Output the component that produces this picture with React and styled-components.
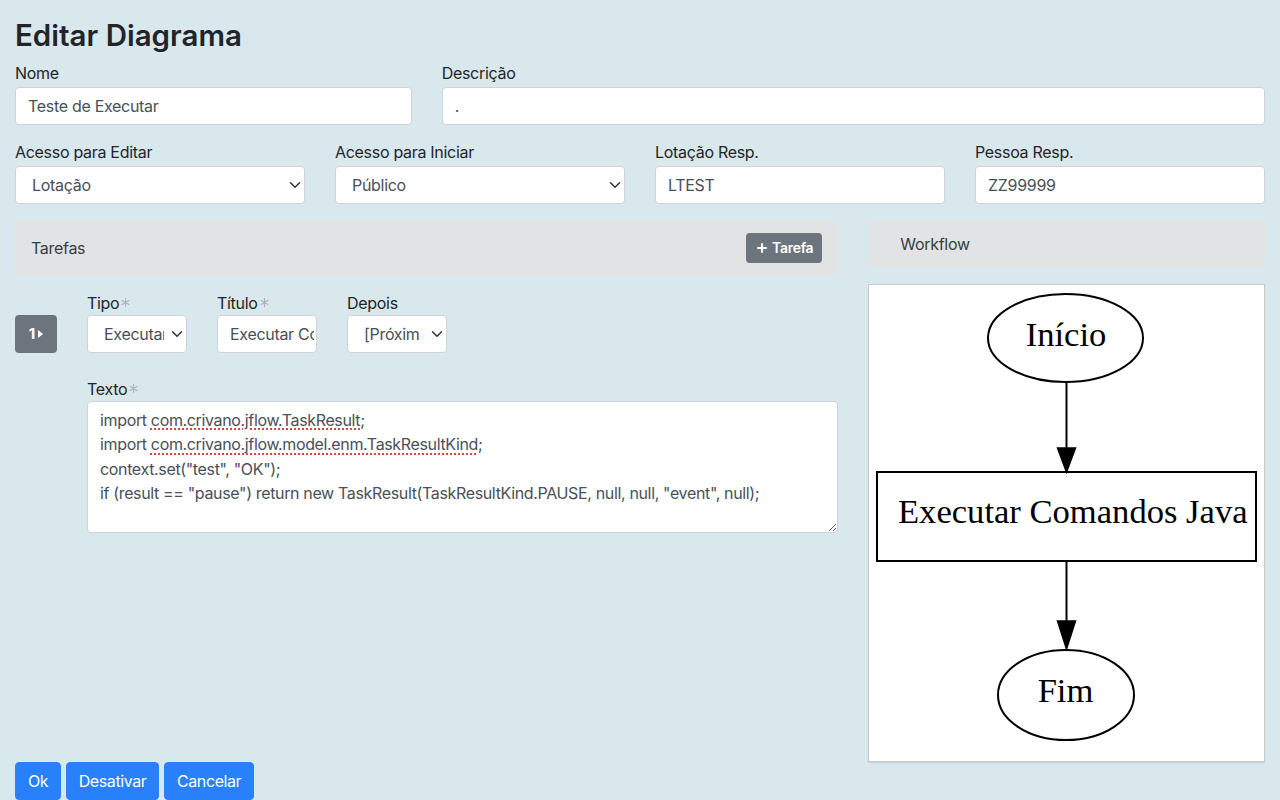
import React from "react";
import styled, { createGlobalStyle } from "styled-components";
import { ChevronDown, Plus } from "lucide-react";

const GlobalStyle = createGlobalStyle`
  html, body { margin: 0; padding: 0; }
  body {
    background: #d9e8ec;
    font-family: Inter, "Liberation Sans", Arial, sans-serif;
    color: #212529;
    font-size: 16px;
    line-height: 24px;
  }
  * { box-sizing: border-box; }
`;

const Page = styled.div`
  padding: 19px 15px 0;
`;

const Title = styled.h3`
  margin: 0 0 10px;
  font-size: 29.5px;
  line-height: 33.6px;
  font-weight: 600;
  letter-spacing: 0;
`;

const Row = styled.div`
  display: flex;
  margin: 0 -15px ${(p) => p.$mb ?? 0}px;
`;

const Col = styled.div`
  flex: 0 0 ${(p) => (p.$span / 12) * 100}%;
  max-width: ${(p) => (p.$span / 12) * 100}%;
  padding: 0 15px;
`;

const Field = styled.div`
  margin-bottom: ${(p) => p.$mb ?? 0}px;
  width: ${(p) => (p.$w ? `${p.$w}px` : "auto")};
`;

const Label = styled.label`
  display: flex;
  align-items: center;
  height: ${(p) => (p.$task ? 24 : 20)}px;
  margin-bottom: ${(p) => (p.$task ? 0 : 4)}px;
  font-size: 16px;
  line-height: 20px;
  letter-spacing: -0.3px;
`;

const ReqMark = styled.svg`
  margin-left: 2px;
  width: 9px;
  height: 9px;
`;

const Input = styled.input`
  display: block;
  width: 100%;
  height: 38px;
  padding: 6px ${(p) => p.$pr ?? 12}px 6px 12px;
  border: 1px solid #ced4da;
  border-radius: 4px;
  background: #fff;
  font: 16px/24px Inter, "Liberation Sans", Arial, sans-serif;
  letter-spacing: -0.3px;
  color: #495057;
  outline: none;
`;

const SelectWrap = styled.div`
  position: relative;
  width: 100%;
`;

const Select = styled.select`
  display: block;
  width: 100%;
  height: 38px;
  appearance: none;
  -webkit-appearance: none;
  padding: 6px ${(p) => p.$pr ?? 28}px 6px 16px;
  border: 1px solid #ced4da;
  border-radius: 4px;
  background: #fff;
  font: 16px/24px Inter, "Liberation Sans", Arial, sans-serif;
  letter-spacing: -0.3px;
  color: #495057;
  outline: none;
`;

const Chevron = styled(ChevronDown)`
  position: absolute;
  right: 1px;
  top: 50%;
  transform: translateY(-50%);
  color: #333;
  pointer-events: none;
`;

const PanelHeader = styled.div`
  display: flex;
  align-items: center;
  justify-content: space-between;
  height: ${(p) => p.$h}px;
  padding: 0 16px 0 ${(p) => p.$pl}px;
  background: #e2e3e5;
  border-radius: 4px;
  color: #383d41;
  font-size: 16px;
  letter-spacing: -0.3px;
`;

const SmallButton = styled.button`
  display: inline-flex;
  align-items: center;
  gap: 3px;
  height: 30px;
  padding: 0 9px 0 9px;
  border: none;
  border-radius: 4px;
  background: #6c757d;
  color: #fff;
  font: 600 14px/20px Inter, "Liberation Sans", Arial, sans-serif;
  letter-spacing: -0.3px;
`;

const TaskRow = styled.div`
  display: flex;
  gap: 30px;
  margin-top: 15px;
`;

const IndexButton = styled.button`
  flex: 0 0 42px;
  height: 38px;
  margin-top: 24px;
  display: flex;
  align-items: center;
  justify-content: center;
  gap: 3px;
  border: none;
  border-radius: 4px;
  background: #6c757d;
  color: #fff;
  font: 700 15px/20px Inter, "Liberation Sans", Arial, sans-serif;
`;

const TaskBody = styled.div`
  flex: 1;
  min-width: 0;
`;

const TaskFields = styled.div`
  display: flex;
  gap: 30px;
  margin-bottom: 24px;
`;

const CodeArea = styled.div`
  height: 132px;
  padding: 6px 12px;
  border: 1px solid #ced4da;
  border-radius: 4px;
  background: #fff;
  color: #495057;
  font-size: 16px;
  line-height: 24.5px;
  letter-spacing: -0.35px;
  white-space: pre;
  overflow: auto;
  resize: vertical;
`;

const Misspelled = styled.span`
  text-decoration: underline dotted #e0443e;
  text-decoration-thickness: 1.5px;
  text-underline-offset: 3px;
`;

const RightStack = styled.div`
  display: flex;
  flex-direction: column;
  gap: 16px;
`;

const DiagramBox = styled.div`
  height: 478px;
  background: #fff;
  border: 1px solid #c9c9c9;
  box-shadow: 0 1px 1px rgba(0, 0, 0, 0.08);
`;

const Actions = styled.div`
  display: flex;
  gap: 4.5px;
`;

const PrimaryButton = styled.button`
  height: 38px;
  padding: 0 12px;
  border: 1px solid #2880fa;
  border-radius: 4px;
  background: #2880fa;
  color: #fff;
  font: 16px/24px Inter, "Liberation Sans", Arial, sans-serif;
  letter-spacing: -0.4px;
`;

const Required = () => (
  <ReqMark viewBox="0 0 10 10">
    <g stroke="#b3b3b3" strokeWidth="1.3" strokeLinecap="round">
      <line x1="5" y1="0.6" x2="5" y2="9.4" />
      <line x1="1.2" y1="2.8" x2="8.8" y2="7.2" />
      <line x1="1.2" y1="7.2" x2="8.8" y2="2.8" />
    </g>
  </ReqMark>
);

const SelectField = ({ value, pr }) => (
  <SelectWrap>
    <Select defaultValue={value} $pr={pr}>
      <option>{value}</option>
    </Select>
    <Chevron size={18} strokeWidth={2} />
  </SelectWrap>
);

const Diagram = () => (
  <svg width="395" height="476" viewBox="0 0 395 476" style={{ display: "block" }}>
    <g fill="none" stroke="#000" strokeWidth="2">
      <ellipse cx="196.5" cy="53" rx="77.5" ry="44" />
      <line x1="197.5" y1="97" x2="197.5" y2="164" />
      <rect x="8" y="187" width="379" height="89" />
      <line x1="197.5" y1="276" x2="197.5" y2="337" />
      <ellipse cx="197" cy="410" rx="68" ry="45" />
    </g>
    <g fill="#000" stroke="#000" strokeWidth="1.5">
      <polygon points="188.5,163 206.5,163 197.5,187" />
      <polygon points="188.5,336 206.5,336 197.5,364" />
    </g>
    <g fontFamily="'Liberation Serif', 'Times New Roman', serif" fontSize="34.6" fill="#000">
      <text x="197" y="61" textAnchor="middle">Início</text>
      <text x="29" y="238">Executar Comandos Java</text>
      <text x="196.5" y="417" textAnchor="middle">Fim</text>
    </g>
  </svg>
);

export default function App() {
  return (
    <>
      <GlobalStyle />
      <Page>
        <Title>Editar Diagrama</Title>
        <Row $mb={17}>
          <Col $span={4}>
            <Field>
              <Label>Nome</Label>
              <Input defaultValue="Teste de Executar" />
            </Field>
          </Col>
          <Col $span={8}>
            <Field>
              <Label>Descrição</Label>
              <Input defaultValue="." />
            </Field>
          </Col>
        </Row>
        <Row $mb={16}>
          <Col $span={3}>
            <Label>Acesso para Editar</Label>
            <SelectField value="Lotação" />
          </Col>
          <Col $span={3}>
            <Label>Acesso para Iniciar</Label>
            <SelectField value="Público" />
          </Col>
          <Col $span={3}>
            <Label>Lotação Resp.</Label>
            <Input defaultValue="LTEST" />
          </Col>
          <Col $span={3}>
            <Label>Pessoa Resp.</Label>
            <Input defaultValue="ZZ99999" />
          </Col>
        </Row>
        <Row>
          <Col $span={8}>
            <PanelHeader $h={56} $pl={16}>
              Tarefas
              <SmallButton>
                <Plus size={14} strokeWidth={3.5} />
                Tarefa
              </SmallButton>
            </PanelHeader>
            <TaskRow>
              <IndexButton>
                1
                <svg width="5" height="8" viewBox="0 0 5 8">
                  <polygon points="0,0 5,4 0,8" fill="#fff" />
                </svg>
              </IndexButton>
              <TaskBody>
                <TaskFields>
                  <Field $w={100}>
                    <Label $task>
                      Tipo
                      <Required />
                    </Label>
                    <SelectField value="Executar Comandos Java" pr={22} />
                  </Field>
                  <Field $w={100}>
                    <Label $task>
                      Título
                      <Required />
                    </Label>
                    <Input defaultValue="Executar Comandos Java" $pr={2} />
                  </Field>
                  <Field $w={100}>
                    <Label $task>Depois</Label>
                    <SelectField value="[Próximo]" pr={26} />
                  </Field>
                </TaskFields>
                <Field>
                  <Label $task>
                    Texto
                    <Required />
                  </Label>
                  <CodeArea>
                    {"import "}
                    <Misspelled>com.crivano.jflow.TaskResult</Misspelled>
                    {";\nimport "}
                    <Misspelled>com.crivano.jflow.model.enm.TaskResultKind</Misspelled>
                    {';\ncontext.set("test", "OK");\nif (result == "pause") return new TaskResult(TaskResultKind.PAUSE, null, null, "event", null);'}
                  </CodeArea>
                </Field>
              </TaskBody>
            </TaskRow>
          </Col>
          <Col $span={4}>
            <RightStack>
              <PanelHeader $h={48} $pl={32}>
                Workflow
              </PanelHeader>
              <DiagramBox>
                <Diagram />
              </DiagramBox>
            </RightStack>
          </Col>
        </Row>
        <Actions>
          <PrimaryButton>Ok</PrimaryButton>
          <PrimaryButton>Desativar</PrimaryButton>
          <PrimaryButton>Cancelar</PrimaryButton>
        </Actions>
      </Page>
    </>
  );
}
